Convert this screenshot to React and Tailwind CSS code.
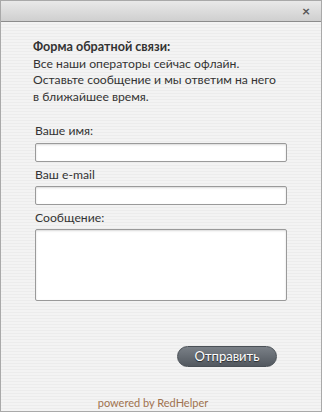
export default function App() {
  const font = { fontFamily: 'Lato, "Open Sans", sans-serif' };
  return (
    <div className="w-[322px] h-[412px] border border-[#a9a9a9] flex flex-col bg-[repeating-linear-gradient(180deg,#f3f3f3_0px,#f3f3f3_2px,#ececec_2px,#ececec_3px)] text-[#333]" style={font}>
      <div className="h-[21px] shrink-0 border-b border-[#8c8c8c] bg-[linear-gradient(180deg,#e9e9e9,#cfcfcf)] flex items-center justify-end pr-[11px]">
        <span className="text-[14px] leading-none font-bold text-[#555]">×</span>
      </div>
      <div className="flex flex-col pl-[32px] pr-[35px] pt-[17px] flex-1">
        <div className="text-[12.2px] leading-[16.5px] whitespace-nowrap">
          <div className="font-bold text-[12.6px]">Форма обратной связи:</div>
          <div>Все наши операторы сейчас офлайн.</div>
          <div>Оставьте сообщение и мы ответим на него</div>
          <div>в ближайшее время.</div>
        </div>
        <div className="flex flex-col pl-[2px] pt-[18px] text-[12.2px]">
          <label className="leading-[16px] mb-[4px]">Ваше имя:</label>
          <input className="h-[19px] w-[252px] bg-white border border-[#9a9a9a] rounded-[2px] shadow-[inset_0_1px_2px_rgba(0,0,0,0.15)]" />
          <label className="leading-[16px] mt-[5px] mb-[3px]">Ваш e-mail</label>
          <input className="h-[19px] w-[252px] bg-white border border-[#9a9a9a] rounded-[2px] shadow-[inset_0_1px_2px_rgba(0,0,0,0.15)]" />
          <label className="leading-[16px] mt-[5px] mb-[3px]">Сообщение:</label>
          <textarea className="h-[72px] w-[252px] resize-none bg-white border border-[#9a9a9a] rounded-[2px] shadow-[inset_0_1px_2px_rgba(0,0,0,0.15)]" />
        </div>
        <div className="flex justify-end pt-[45px] pr-[9px]">
          <button className="w-[100px] h-[21px] rounded-full border border-[#4a5056] bg-[linear-gradient(180deg,#7a8087,#52585f)] text-white text-[13px] leading-none [text-shadow:0_1px_1px_rgba(0,0,0,0.6)]">Отправить</button>
        </div>
        <div className="flex-1" />
        <div className="text-center text-[11px] text-[#a0724f] pb-[1px] pr-[13px] leading-[14px]">powered by RedHelper</div>
      </div>
    </div>
  );
}
